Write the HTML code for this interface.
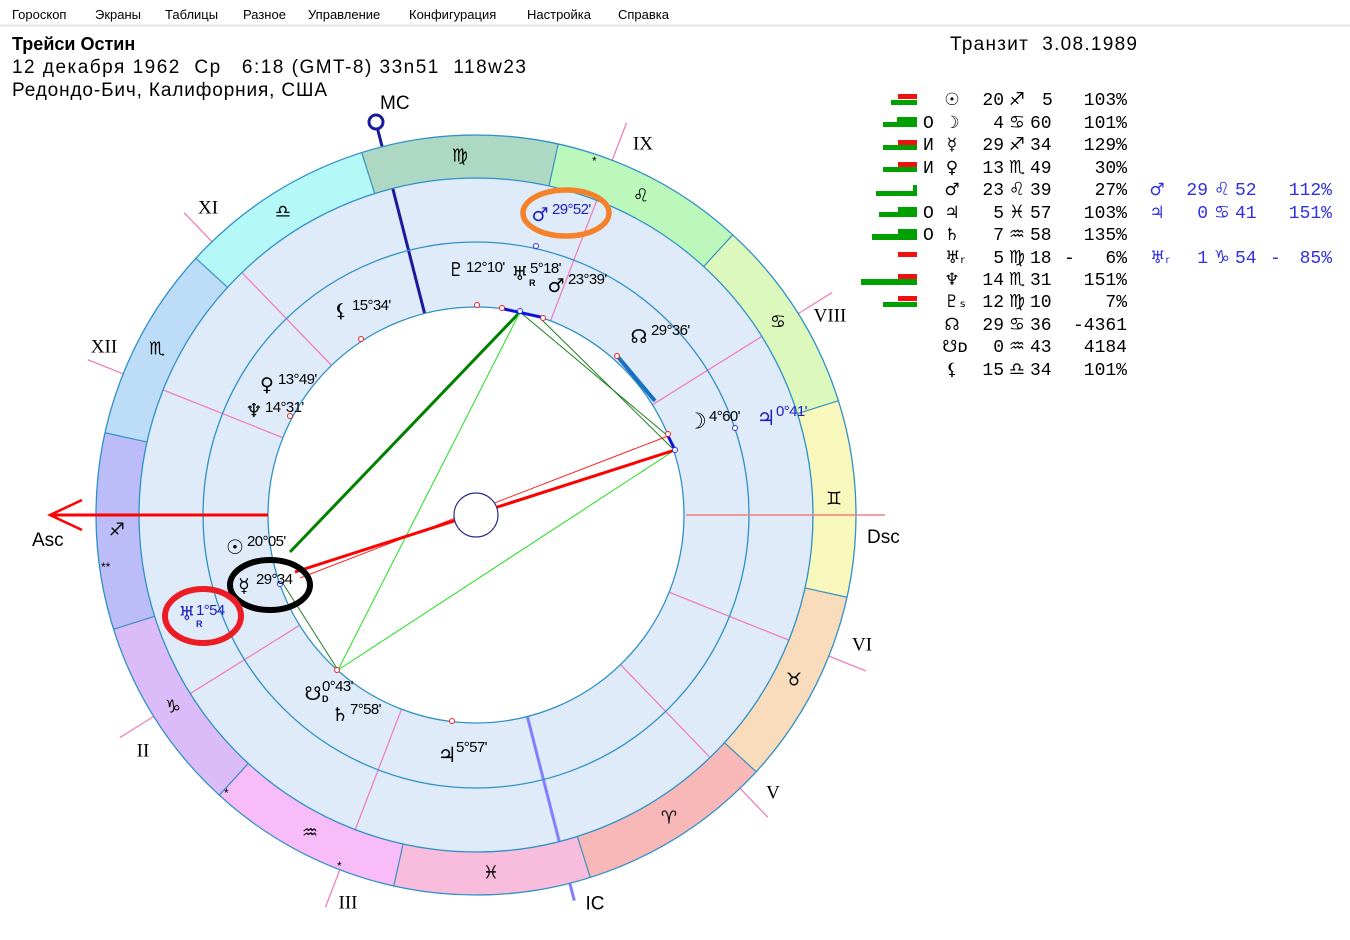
<!DOCTYPE html>
<html><head><meta charset="utf-8"><style>
html,body{margin:0;padding:0;background:#fff;width:1350px;height:940px;overflow:hidden}
svg{display:block;position:absolute;left:0;top:0}
text{white-space:pre}
.m{font-family:"Liberation Sans",sans-serif;font-size:13px;fill:#000}
.h{font-family:"Liberation Sans",sans-serif;font-size:19px;fill:#000}
.s{font-family:"DejaVu Sans",sans-serif;font-size:18px;fill:#000;text-anchor:middle;dominant-baseline:central}
.p{font-family:"DejaVu Sans",sans-serif;font-size:19px;fill:#000;text-anchor:middle;dominant-baseline:central}
.l{font-family:"Liberation Sans",sans-serif;font-size:15px;fill:#000;letter-spacing:-0.6px}
.b{fill:#2020c0}
.r{font-family:"Liberation Serif",serif;font-size:19px;fill:#000;text-anchor:middle;dominant-baseline:central}
.t{font-family:"Liberation Mono","DejaVu Sans Mono",monospace;font-size:18px;fill:#000}
.tg{font-family:"DejaVu Sans",sans-serif;font-size:17px;fill:#000;text-anchor:middle}
.tb{fill:#3030e0}
</style></head><body>
<svg width="1350" height="940" viewBox="0 0 1350 940" xmlns="http://www.w3.org/2000/svg" xml:space="preserve">
<text class="m" x="12" y="19">Гороскоп</text>
<text class="m" x="95" y="19">Экраны</text>
<text class="m" x="165" y="19">Таблицы</text>
<text class="m" x="243" y="19">Разное</text>
<text class="m" x="308" y="19">Управление</text>
<text class="m" x="409" y="19">Конфигурация</text>
<text class="m" x="527" y="19">Настройка</text>
<text class="m" x="618" y="19">Справка</text>
<line x1="0" y1="25.5" x2="1350" y2="25.5" stroke="#e6e6e6" stroke-width="2"/>
<text class="h" x="12" y="50" font-weight="bold" style="font-size:18px">Трейси Остин</text>
<text class="h" x="12" y="73" textLength="514" lengthAdjust="spacing">12 декабря 1962  Ср   6:18 (GMT-8) 33n51  118w23</text>
<text class="h" x="12" y="96" textLength="315" lengthAdjust="spacing">Редондо-Бич, Калифорния, США</text>
<text class="h" x="950" y="50" textLength="187" lengthAdjust="spacing">Транзит  3.08.1989</text>

<g transform="translate(476,515)">
<circle r="337" fill="#dfebf8"/>
<g stroke="#f080c0" stroke-width="1.3">
<g transform="rotate(-134)"><line x1="208" x2="337"/><line x1="380" x2="420"/></g>
<g transform="rotate(-158.2)"><line x1="208" x2="337"/><line x1="380" x2="418"/></g>
<g transform="rotate(-69)"><line x1="208" x2="337"/><line x1="380" x2="420"/></g>
<g transform="rotate(-32)"><line x1="208" x2="337"/><line x1="380" x2="420"/></g>
<g transform="rotate(21.8)"><line x1="208" x2="337"/><line x1="380" x2="420"/></g>
<g transform="rotate(46)"><line x1="208" x2="337"/><line x1="380" x2="420"/></g>
<g transform="rotate(111)"><line x1="208" x2="337"/><line x1="380" x2="420"/></g>
<g transform="rotate(148)"><line x1="208" x2="337"/><line x1="380" x2="420"/></g>
</g>
<g transform="rotate(-104.3)" stroke="#1a1a9a" stroke-width="3"><line x1="208" x2="338"/><line x1="380" x2="398"/></g>
<g transform="rotate(75.7)" stroke="#8080ff" stroke-width="3"><line x1="208" x2="338"/><line x1="380" x2="398"/></g>
<g fill="none" stroke-width="43">
<circle r="358.5" stroke="#f8b8b8" stroke-dasharray="187.7 3000" transform="rotate(42.5)"/>
<circle r="358.5" stroke="#f8dcbc" stroke-dasharray="187.7 3000" transform="rotate(12.5)"/>
<circle r="358.5" stroke="#f8f8bc" stroke-dasharray="187.7 3000" transform="rotate(-17.5)"/>
<circle r="358.5" stroke="#dcf8bc" stroke-dasharray="187.7 3000" transform="rotate(-47.5)"/>
<circle r="358.5" stroke="#bcf8bc" stroke-dasharray="187.7 3000" transform="rotate(-77.5)"/>
<circle r="358.5" stroke="#acd8c4" stroke-dasharray="187.7 3000" transform="rotate(-107.5)"/>
<circle r="358.5" stroke="#b4f8f8" stroke-dasharray="187.7 3000" transform="rotate(-137.5)"/>
<circle r="358.5" stroke="#bcdcf8" stroke-dasharray="187.7 3000" transform="rotate(-167.5)"/>
<circle r="358.5" stroke="#bcbcf8" stroke-dasharray="187.7 3000" transform="rotate(-197.5)"/>
<circle r="358.5" stroke="#dcbcf8" stroke-dasharray="187.7 3000" transform="rotate(-227.5)"/>
<circle r="358.5" stroke="#f8bcf8" stroke-dasharray="187.7 3000" transform="rotate(-257.5)"/>
<circle r="358.5" stroke="#f8bcdc" stroke-dasharray="187.7 3000" transform="rotate(-287.5)"/>
</g>
<g stroke="#3a90c0" stroke-width="1.2">
<line x1="337" x2="380" transform="rotate(42.5)"/><line x1="337" x2="380" transform="rotate(12.5)"/>
<line x1="337" x2="380" transform="rotate(-17.5)"/><line x1="337" x2="380" transform="rotate(-47.5)"/>
<line x1="337" x2="380" transform="rotate(-77.5)"/><line x1="337" x2="380" transform="rotate(-107.5)"/>
<line x1="337" x2="380" transform="rotate(-137.5)"/><line x1="337" x2="380" transform="rotate(-167.5)"/>
<line x1="337" x2="380" transform="rotate(-197.5)"/><line x1="337" x2="380" transform="rotate(-227.5)"/>
<line x1="337" x2="380" transform="rotate(-257.5)"/><line x1="337" x2="380" transform="rotate(-287.5)"/>
</g>
<circle r="208" fill="#fff"/>
<g fill="none" stroke="#3090c8" stroke-width="1.3">
<circle r="380"/><circle r="337"/><circle r="273"/><circle r="208"/>
</g>
</g>
<text class="s" x="669" y="818">♈&#xFE0E;</text>
<text class="s" x="794" y="680">♉&#xFE0E;</text>
<text class="s" x="834" y="499">♊&#xFE0E;</text>
<text class="s" x="778" y="322">♋&#xFE0E;</text>
<text class="s" x="641" y="196">♌&#xFE0E;</text>
<text class="s" x="460" y="156">♍&#xFE0E;</text>
<text class="s" x="283" y="212">♎&#xFE0E;</text>
<text class="s" x="157" y="349">♏&#xFE0E;</text>
<text class="s" x="117" y="530">♐&#xFE0E;</text>
<text class="s" x="173" y="707">♑&#xFE0E;</text>
<text class="s" x="310" y="833">♒&#xFE0E;</text>
<text class="s" x="491" y="873">♓&#xFE0E;</text>
<g font-family="Liberation Sans" font-size="12" fill="#000">
<text x="592" y="165">*</text><text x="101" y="571">**</text><text x="224" y="797">*</text><text x="337" y="870">*</text>
</g>
<text class="r" x="208" y="208">XI</text>
<text class="r" x="104" y="347">XII</text>
<text class="r" x="643" y="144">IX</text>
<text class="r" x="830" y="316">VIII</text>
<text class="r" x="862" y="645">VI</text>
<text class="r" x="773" y="793">V</text>
<text class="r" x="143" y="751">II</text>
<text class="r" x="348" y="903">III</text>
<text class="r" x="595" y="904" style="font-family:'Liberation Sans',sans-serif">IC</text>
<text class="h" x="380" y="109">MC</text>
<text class="h" x="32" y="546">Asc</text>
<text class="h" x="867" y="543">Dsc</text>
<circle cx="376" cy="122" r="7" fill="#fff" stroke="#1a1a9a" stroke-width="3"/>
<line x1="686" y1="515" x2="885" y2="515" stroke="#f08080" stroke-width="1.5"/>
<g fill="none">
<line x1="290" y1="552" x2="520" y2="312" stroke="#008000" stroke-width="3"/>
<line x1="520" y1="312" x2="668" y2="436" stroke="#208020" stroke-width="1"/>
<line x1="540" y1="318" x2="672" y2="448" stroke="#208020" stroke-width="1"/>
<line x1="520" y1="312" x2="338" y2="670" stroke="#20e020" stroke-width="1"/>
<line x1="338" y1="670" x2="675" y2="450" stroke="#20e020" stroke-width="1"/>
<line x1="338" y1="670" x2="282" y2="582" stroke="#208020" stroke-width="1"/>
<line x1="300" y1="578" x2="668" y2="436" stroke="#ff2020" stroke-width="1"/>
<line x1="295" y1="572" x2="675" y2="450" stroke="#ff0000" stroke-width="3"/>
<line x1="504" y1="309" x2="545" y2="318" stroke="#1010e0" stroke-width="3"/>
<line x1="668" y1="436" x2="675" y2="450" stroke="#1010e0" stroke-width="3"/>
<line x1="618" y1="357" x2="655" y2="401" stroke="#1a70c0" stroke-width="4"/>
</g>
<circle cx="476" cy="515" r="22" fill="#fff" stroke="#303090" stroke-width="1.2"/>
<line x1="50" y1="515" x2="268" y2="515" stroke="#ff0000" stroke-width="3"/>
<polyline points="82,500 50,515 82,530" fill="none" stroke="#ff0000" stroke-width="2.5"/>
<g fill="#fff" stroke-width="1">
<circle cx="477" cy="305" r="2.5" stroke="#f02020"/><circle cx="502" cy="308" r="2.5" stroke="#f02020"/>
<circle cx="543" cy="318" r="2.5" stroke="#f02020"/><circle cx="361" cy="339" r="2.5" stroke="#f02020"/>
<circle cx="290" cy="416" r="2.5" stroke="#f02020"/><circle cx="617" cy="356" r="2.5" stroke="#f02020"/>
<circle cx="668" cy="434" r="2.5" stroke="#f02020"/><circle cx="337" cy="670" r="2.5" stroke="#f02020"/>
<circle cx="452" cy="721" r="2.5" stroke="#f02020"/>
<circle cx="536" cy="246" r="2.5" stroke="#3030f0"/><circle cx="735" cy="428" r="2.5" stroke="#3030f0"/>
<circle cx="675" cy="450" r="2.5" stroke="#3030f0"/><circle cx="280" cy="584" r="2.5" stroke="#3030f0"/>
<circle cx="520" cy="311" r="2.5" stroke="#3030f0"/>
</g>
<text class="p" x="456" y="270">♇</text><text class="l" x="466" y="272">12°10'</text>
<text class="p" x="520" y="274">♅</text><text x="529" y="286" font-family="Liberation Sans" font-size="9" font-weight="bold">R</text><text class="l" x="530" y="273">5°18'</text>
<text class="p" x="556" y="286">♂</text><text class="l" x="568" y="284">23°39'</text>
<text class="p" x="341" y="311">⚸</text><text class="l" x="352" y="310">15°34'</text>
<text class="p" x="639" y="337">☊</text><text class="l" x="651" y="335">29°36'</text>
<text class="p" x="267" y="385">♀</text><text class="l" x="278" y="384">13°49'</text>
<text class="p" x="254" y="411">♆</text><text class="l" x="265" y="412">14°31'</text>
<text class="p" x="697" y="422" style="font-size:22px">☽</text><text class="l" x="709" y="421">4°60'</text>
<text class="p b" x="766" y="418" style="font-size:21px">♃</text><text class="l b" x="776" y="416">0°41'</text>
<text class="p b" x="540" y="215">♂</text><text class="l b" x="552" y="214">29°52'</text>
<text class="p" x="235" y="547" style="font-size:20px">☉</text><text class="l" x="247" y="546">20°05'</text>
<text class="p" x="244" y="586">☿</text><text class="l" x="256" y="584">29°34</text>
<text class="p b" x="187" y="614">♅</text><text x="196" y="627" font-family="Liberation Sans" font-size="9" font-weight="bold" fill="#2020c0">R</text><text class="l b" x="196" y="615">1°54</text>
<text class="p" x="313" y="694">☋</text><text x="322" y="702" font-family="Liberation Sans" font-size="9" font-weight="bold">D</text><text class="l" x="322" y="691">0°43'</text>
<text class="p" x="340" y="715">♄</text><text class="l" x="350" y="714">7°58'</text>
<text class="p" x="447" y="755" style="font-size:21px">♃</text><text class="l" x="456" y="752">5°57'</text>
<ellipse cx="566" cy="213" rx="43" ry="23" fill="none" stroke="#f5822a" stroke-width="5.5"/>
<ellipse cx="270" cy="585" rx="40" ry="25" fill="none" stroke="#000" stroke-width="6"/>
<ellipse cx="203" cy="616" rx="38" ry="27" fill="none" stroke="#ec1c24" stroke-width="6"/>

<g fill="#00a000">
<rect x="891" y="100" width="26" height="5"/>
<rect x="897" y="117" width="20" height="5"/><rect x="883" y="122" width="34" height="5"/>
<rect x="883" y="145" width="34" height="5"/>
<rect x="883" y="167" width="34" height="5"/>
<rect x="876" y="191" width="41" height="5"/><rect x="913" y="185" width="4" height="6"/>
<rect x="898" y="207" width="19" height="5"/><rect x="879" y="212" width="38" height="5"/>
<rect x="898" y="229" width="19" height="5"/><rect x="872" y="234" width="45" height="6"/>
<rect x="861" y="279" width="56" height="6"/>
<rect x="883" y="302" width="34" height="5"/>
</g>
<g fill="#f01010">
<rect x="898" y="94" width="19" height="5"/><rect x="898" y="140" width="19" height="5"/>
<rect x="898" y="162" width="19" height="5"/><rect x="898" y="252" width="19" height="5"/>
<rect x="898" y="274" width="19" height="5"/><rect x="898" y="296" width="19" height="5"/>
</g>
<g class="t">
<text x="923" y="128">O</text><text x="923" y="150">И</text><text x="923" y="173">И</text>
<text x="923" y="218">O</text><text x="923" y="240">O</text>
</g>
<g class="tg">
<text x="952" y="105">☉</text><text x="952" y="128">☽</text><text x="952" y="150">☿</text><text x="952" y="173">♀</text>
<text x="952" y="195">♂</text><text x="952" y="218">♃</text><text x="952" y="240">♄</text><text x="955" y="263">♅ᵣ</text>
<text x="952" y="285">♆</text><text x="955" y="307">♇ₛ</text><text x="952" y="330">☊</text><text x="955" y="352">☋ᴅ</text><text x="952" y="375">⚸</text>
</g>
<g class="t" text-anchor="end">
<text x="1004" y="105">20</text><text x="1004" y="128">4</text><text x="1004" y="150">29</text><text x="1004" y="173">13</text>
<text x="1004" y="195">23</text><text x="1004" y="218">5</text><text x="1004" y="240">7</text><text x="1004" y="263">5</text>
<text x="1004" y="285">14</text><text x="1004" y="307">12</text><text x="1004" y="330">29</text><text x="1004" y="352">0</text><text x="1004" y="375">15</text>
</g>
<g class="tg" style="font-size:18px">
<text x="1017" y="105">♐</text><text x="1017" y="128">♋</text><text x="1017" y="150">♐</text><text x="1017" y="173">♏</text>
<text x="1017" y="195">♌</text><text x="1017" y="218">♓</text><text x="1017" y="240">♒</text><text x="1017" y="263">♍</text>
<text x="1017" y="285">♏</text><text x="1017" y="307">♍</text><text x="1017" y="330">♋</text><text x="1017" y="352">♒</text><text x="1017" y="375">♎</text>
</g>
<g class="t">
<text x="1042" y="105">5</text><text x="1030" y="128">60</text><text x="1030" y="150">34</text><text x="1030" y="173">49</text>
<text x="1030" y="195">39</text><text x="1030" y="218">57</text><text x="1030" y="240">58</text><text x="1030" y="263">18</text>
<text x="1030" y="285">31</text><text x="1030" y="307">10</text><text x="1030" y="330">36</text><text x="1030" y="352">43</text><text x="1030" y="375">34</text>
<text x="1064" y="263">-</text>
</g>
<g class="t" text-anchor="end">
<text x="1127" y="105">103%</text><text x="1127" y="128">101%</text><text x="1127" y="150">129%</text><text x="1127" y="173">30%</text>
<text x="1127" y="195">27%</text><text x="1127" y="218">103%</text><text x="1127" y="240">135%</text><text x="1127" y="263">6%</text>
<text x="1127" y="285">151%</text><text x="1127" y="307">7%</text><text x="1127" y="330">-4361</text><text x="1127" y="352">4184</text><text x="1127" y="375">101%</text>
</g>
<g class="tb">
<text class="tg tb" x="1157" y="195">♂</text><text class="tg tb" x="1157" y="218">♃</text><text class="tg tb" x="1160" y="263">♅ᵣ</text>
<text class="t tb" x="1208" y="195" text-anchor="end">29</text><text class="t tb" x="1208" y="218" text-anchor="end">0</text><text class="t tb" x="1208" y="263" text-anchor="end">1</text>
<text class="tg tb" x="1222" y="195" style="font-size:18px">♌</text><text class="tg tb" x="1222" y="218" style="font-size:18px">♋</text><text class="tg tb" x="1222" y="263" style="font-size:18px">♑</text>
<text class="t tb" x="1235" y="195">52</text><text class="t tb" x="1235" y="218">41</text><text class="t tb" x="1235" y="263">54</text>
<text class="t tb" x="1270" y="263">-</text>
<text class="t tb" x="1332" y="195" text-anchor="end">112%</text><text class="t tb" x="1332" y="218" text-anchor="end">151%</text><text class="t tb" x="1332" y="263" text-anchor="end">85%</text>
</g>
</svg>
</body></html>
